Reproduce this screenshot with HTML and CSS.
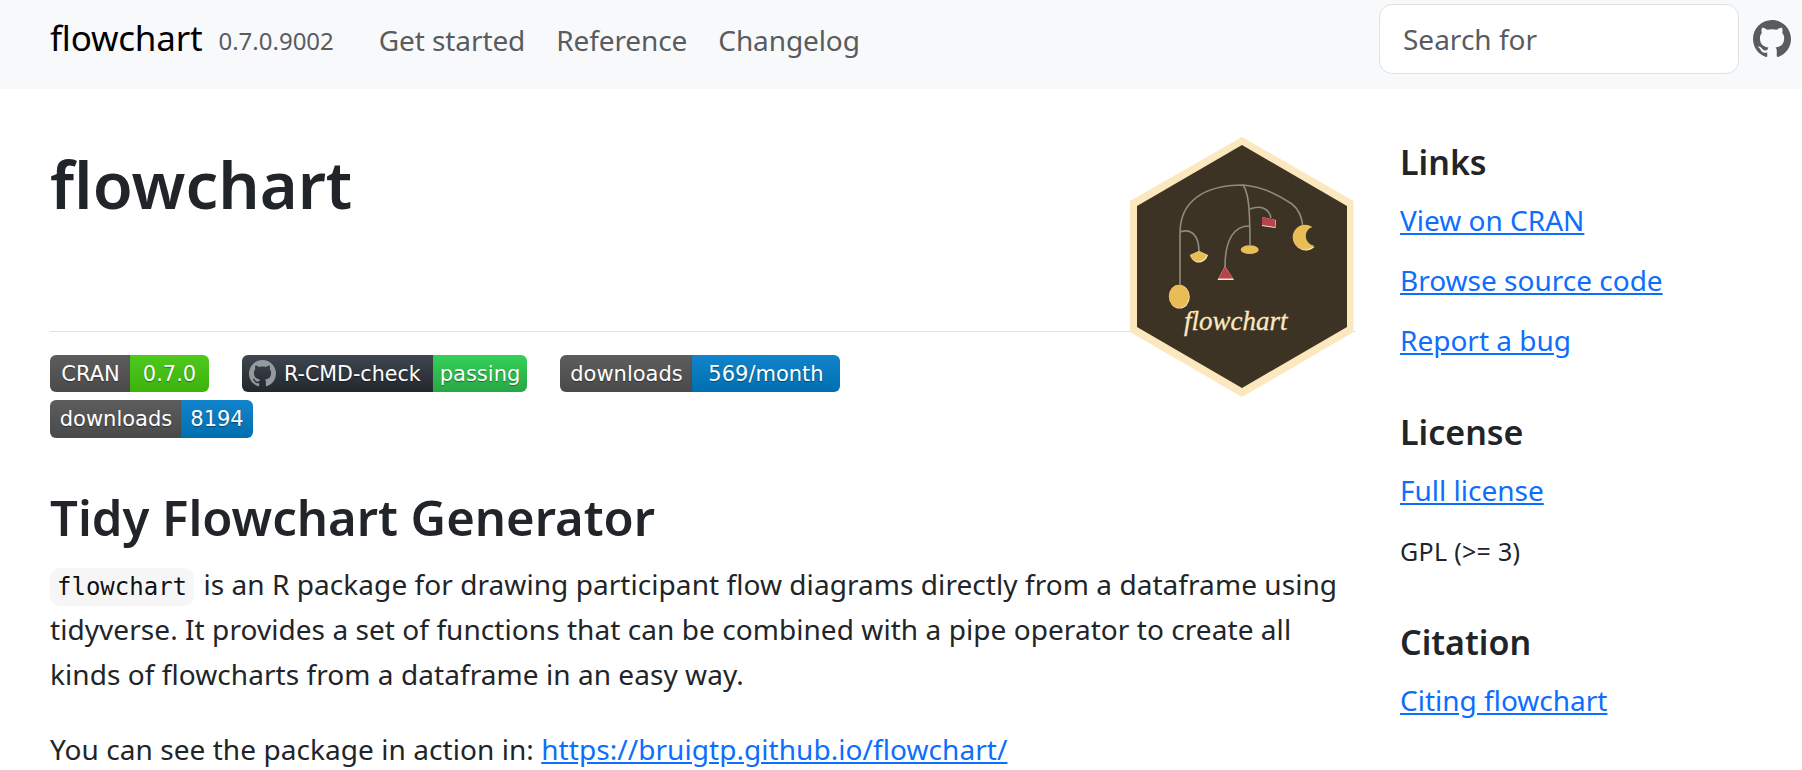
FILE: index.html
```html
<!DOCTYPE html>
<html lang="en">
<head>
<meta charset="utf-8">
<title>flowchart</title>
<link rel="stylesheet" href="styles.css">
</head>
<body>
<nav class="navbar">
  <a class="brand" href="#">flowchart</a>
  <small class="version">0.7.0.9002</small>
  <ul class="navlinks">
    <li><a href="#">Get started</a></li>
    <li><a href="#">Reference</a></li>
    <li><a href="#">Changelog</a></li>
  </ul>
  <input class="search" type="search" placeholder="Search for">
  <a class="gh" href="#" aria-label="GitHub">
    <svg viewBox="0 0 16 16" class="gh-icon"><path d="M8 0C3.58 0 0 3.58 0 8c0 3.54 2.29 6.53 5.47 7.59.4.07.55-.17.55-.38 0-.19-.01-.82-.01-1.49-2.01.37-2.53-.49-2.69-.94-.09-.23-.48-.94-.82-1.13-.28-.15-.68-.52-.01-.53.63-.01 1.08.58 1.23.82.72 1.21 1.87.87 2.33.66.07-.52.28-.87.51-1.07-1.78-.2-3.64-.89-3.64-3.95 0-.87.31-1.59.82-2.15-.08-.2-.36-1.02.08-2.12 0 0 .67-.21 2.2.82.64-.18 1.32-.27 2-.27.68 0 1.36.09 2 .27 1.53-1.04 2.2-.82 2.2-.82.44 1.1.16 1.92.08 2.12.51.56.82 1.27.82 2.15 0 3.07-1.87 3.75-3.65 3.95.29.25.54.73.54 1.48 0 1.07-.01 1.93-.01 2.2 0 .21.15.46.55.38A8.013 8.013 0 0016 8c0-4.42-3.58-8-8-8z"/></svg>
  </a>
</nav>
<div class="page">
  <main class="content">
    <svg class="logo" viewBox="30 17 224 260" aria-label="flowchart logo">
      <polygon class="hex-outer" points="142,17 253.5,81 253.5,212 142,277 30,212 30,81"/>
      <polygon class="hex-inner" points="142,25 247,86 247,207 142,268 37,207 37,86"/>
      <g class="wires">
        <path d="M80 165V113C80 82 103 65 143 65C165 67 182 77 192 84C200 90 202 98 203 107"/>
        <path d="M143 65C148 72 150 85 150 125"/>
        <path d="M80 112C91 108 99 115 99 132"/>
        <path d="M149 106C135 106 125 118 125 147"/>
        <path d="M150 89C160 85 169 88 171 98"/>
      </g>
      <ellipse class="pale" cx="79.5" cy="176.8" rx="10.3" ry="11.8"/>
      <ellipse class="gold" cx="78.9" cy="176.3" rx="10.1" ry="11.6"/>
      <path class="pale" d="M90 135L99 131L108 135C106 143 94 147 90 135Z"/>
      <path class="gold" d="M90 135L99 131L107 135C104 142 94 145 90 135Z"/>
      <polygon class="pale" points="125,146 134,160 117.5,160"/>
      <polygon class="red" points="125,146 133,158.5 118.5,158.5"/>
      <ellipse class="gold" cx="149.7" cy="129.7" rx="9" ry="4.4"/>
      <polygon class="pale" points="162,97 176,100 175.5,108 162,106"/>
      <polygon class="red" points="162,97 175.4,100 175,107 162,105"/>
      <path class="pale" d="M212 107A12.5 12.5 0 1 0 215 126.5A9.6 9.6 0 0 1 212 107Z"/>
      <path class="gold" d="M212 107A12.3 12.3 0 1 0 214 125.5A9.6 9.6 0 0 1 212 107Z"/>
      <text class="logo-text" x="84" y="210">flowchart</text>
    </svg>
    <header class="page-head">
      <h1>flowchart</h1>
    </header>
    <div class="badges">
      <a class="badge b-cran" href="#"><span class="l">CRAN</span><span class="r green">0.7.0</span></a>
      <a class="badge b-check" href="#"><span class="l dark"><svg viewBox="0 0 16 16" class="badge-icon"><path d="M8 0C3.58 0 0 3.58 0 8c0 3.54 2.29 6.53 5.47 7.59.4.07.55-.17.55-.38 0-.19-.01-.82-.01-1.49-2.01.37-2.53-.49-2.69-.94-.09-.23-.48-.94-.82-1.13-.28-.15-.68-.52-.01-.53.63-.01 1.08.58 1.23.82.72 1.21 1.87.87 2.33.66.07-.52.28-.87.51-1.07-1.78-.2-3.64-.89-3.64-3.95 0-.87.31-1.59.82-2.15-.08-.2-.36-1.02.08-2.12 0 0 .67-.21 2.2.82.64-.18 1.32-.27 2-.27.68 0 1.36.09 2 .27 1.53-1.04 2.2-.82 2.2-.82.44 1.1.16 1.92.08 2.12.51.56.82 1.27.82 2.15 0 3.07-1.87 3.75-3.65 3.95.29.25.54.73.54 1.48 0 1.07-.01 1.93-.01 2.2 0 .21.15.46.55.38A8.013 8.013 0 0016 8c0-4.42-3.58-8-8-8z"/></svg>R-CMD-check</span><span class="r pass">passing</span></a>
      <a class="badge b-month" href="#"><span class="l">downloads</span><span class="r blue">569/month</span></a>
      <a class="badge b-total" href="#"><span class="l">downloads</span><span class="r blue">8194</span></a>
    </div>
    <h2>Tidy Flowchart Generator</h2>
    <p><code>flowchart</code> is an R package for drawing participant flow diagrams directly from a dataframe using tidyverse. It provides a set of functions that can be combined with a pipe operator to create all kinds of flowcharts from a dataframe in an easy way.</p>
    <p>You can see the package in action in: <a href="#">https://bruigtp.github.io/flowchart/</a></p>
  </main>
  <aside class="sidebar">
    <section>
      <h3>Links</h3>
      <ul>
        <li><a href="#">View on CRAN</a></li>
        <li><a href="#">Browse source code</a></li>
        <li><a href="#">Report a bug</a></li>
      </ul>
    </section>
    <section>
      <h3>License</h3>
      <ul>
        <li><a href="#">Full license</a></li>
        <li class="small">GPL (&gt;= 3)</li>
      </ul>
    </section>
    <section>
      <h3>Citation</h3>
      <ul>
        <li><a href="#">Citing flowchart</a></li>
      </ul>
    </section>
  </aside>
</div>
</body>
</html>
```
FILE: styles.css
```css
* { box-sizing: border-box; }
html, body { margin: 0; height: 770px; overflow: hidden; }
body {
  font-family: "Noto Sans", "Open Sans", sans-serif;
  font-size: 28px;
  line-height: 45px;
  color: #212529;
  background: #fff;
}
a { color: #0d6efd; }
.navbar {
  display: flex;
  align-items: center;
  height: 89px;
  padding: 0 11px 0 50px;
  background: #f8f9fa;
}
.brand { font-size: 35px; color: #000; text-decoration: none; letter-spacing: -0.2px; margin-bottom: 15px; }
.version { font-size: 24px; color: #595c5f; margin: 0 0 8px 16px; }
.navlinks { display: flex; gap: 31px; list-style: none; margin: 0 0 9px 45px; padding: 0; flex: 1; letter-spacing: -0.1px; }
.navlinks a { color: #595c5f; text-decoration: none; }
.search {
  width: 360px;
  height: 70px;
  margin: 0 14px 11px 0;
  padding: 0 23px;
  border: 1px solid #dee2e6;
  border-radius: 13px;
  background: #fff;
  font: inherit;
  outline: none;
}
.search::placeholder { color: #595c5f; opacity: 1; }
.gh { display: flex; margin-bottom: 11px; }
.gh-icon { width: 38px; height: 38px; fill: #595c5f; }
.page { display: flex; padding: 0 0 0 50px; gap: 44px; }
.content { position: relative; width: 1306px; flex: none; }
.logo { position: absolute; top: 48px; right: 2px; width: 224px; height: 260px; }
.hex-outer { fill: #fbe8bf; }
.hex-inner { fill: #3d3325; }
.wires { fill: none; stroke: #8f8a7d; stroke-width: 1.6; }
.pale { fill: #fbe8bf; }
.gold { fill: #e8bd56; }
.red { fill: #b8434d; }
.logo-text { font-family: "Liberation Serif", serif; font-style: italic; font-size: 27px; fill: #fbe8bf; stroke: #fbe8bf; stroke-width: 0.3; }
.page-head { height: 243px; border-bottom: 1px solid #dee2e6; margin-bottom: 23px; }
h1 { margin: 0; padding-top: 56px; font-size: 65px; line-height: 1.2; font-weight: 600; }
.badges { display: flex; flex-wrap: wrap; gap: 8px 33px; width: 900px; margin-bottom: 50px; }
.badge {
  display: flex;
  height: 37px;
  border-radius: 6px;
  overflow: hidden;
  font-family: "DejaVu Sans", sans-serif;
  font-size: 21px;
  line-height: 36px;
  color: #fff;
  text-decoration: none;
  text-shadow: 0 1px 1px rgba(0,0,0,.4);
}
.badge span { display: flex; align-items: center; justify-content: center; }
.badge .l { padding-left: 2px; background: linear-gradient(#5d5d5d, #4a4a4a); border-right: 1px solid #3f3f3f33; }
.badge .dark { justify-content: flex-start; padding-left: 7px; font-size: 20.6px; background: linear-gradient(#3f4650, #23272d); }
.badge .green { background: linear-gradient(#4fc91e, #3bb30b); }
.badge .pass { background: linear-gradient(#34d058, #28a745); }
.badge .blue { background: linear-gradient(#1284cc, #006fb0); }
.b-cran .l { width: 80px; } .b-cran .r { width: 79px; }
.b-check .l { width: 191px; } .b-check .r { width: 94px; }
.b-month .l { width: 132px; } .b-month .r { width: 148px; }
.b-total { height: 38px; }
.b-total .l { width: 131px; } .b-total .r { width: 72px; }
.badge-icon { width: 27px; height: 27px; fill: #959a9f; margin-right: 8px; flex: none; }
h2 { margin: 0 0 16px; font-size: 49px; line-height: 58px; font-weight: 600; }
p { margin: 0 0 30px; letter-spacing: 0.06px; }
code {
  font-family: "DejaVu Sans Mono", monospace;
  font-size: 24px;
  line-height: 1;
  padding: 5px 7px;
  background: #f6f6f6;
  border-radius: 10px;
  margin-right: 2px;
  letter-spacing: 0;
  color: #111;
}
.sidebar { flex: 1; padding-top: 49px; }
.sidebar section { margin-bottom: 45px; }
.sidebar section:nth-child(2) { margin-bottom: 44px; }
h3 { margin: 0 0 12px; font-size: 34px; line-height: 48px; font-weight: 600; }
.sidebar ul { list-style: none; margin: 0; padding: 0; display: flex; flex-direction: column; gap: 15px; }
.small { font-size: 25px; padding-top: 1px; letter-spacing: 0.3px; }
```
